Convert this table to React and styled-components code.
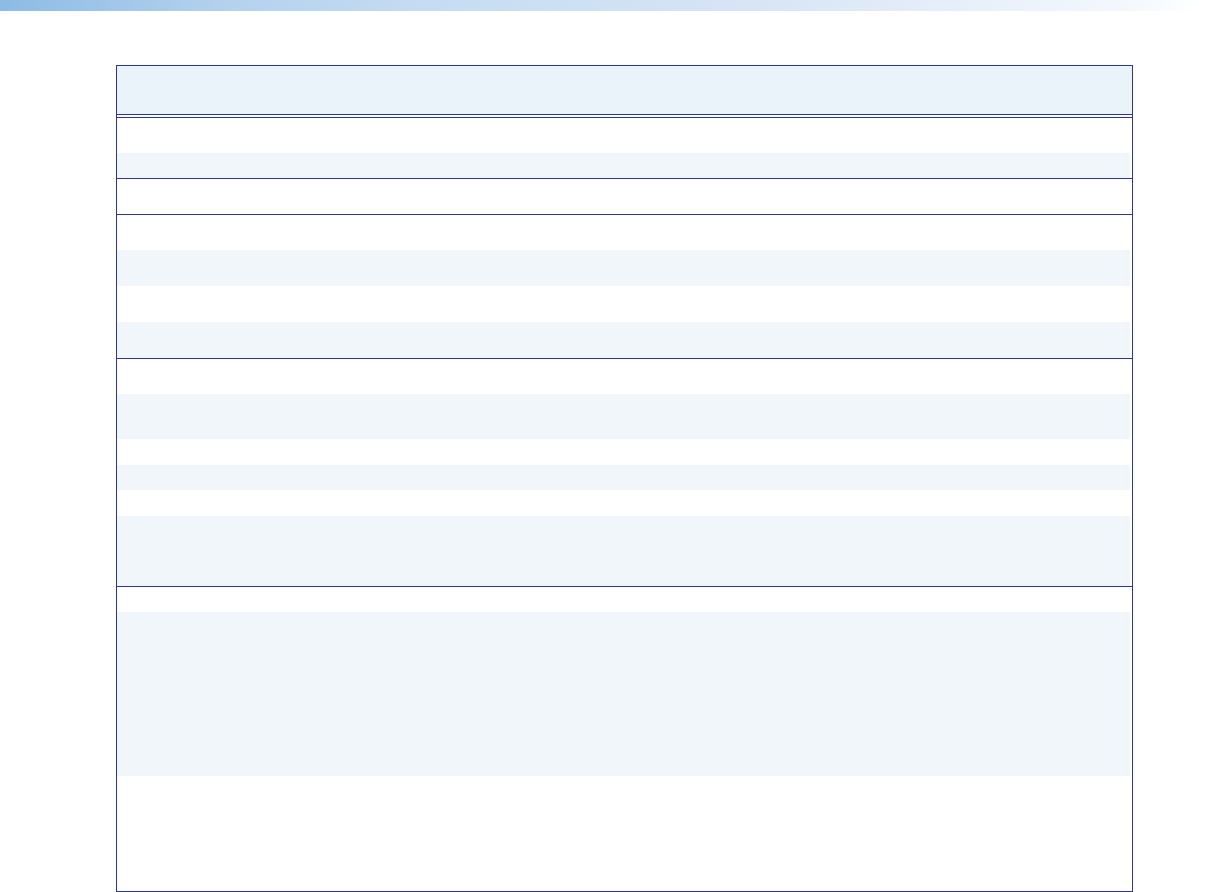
import React from "react";
import styled, { createGlobalStyle } from "styled-components";

const GlobalStyle = createGlobalStyle`
  html, body { margin: 0; padding: 0; background: #ffffff; }
  body { font-family: "Liberation Sans", Arial, sans-serif; }
`;

const Page = styled.div`
  width: 1224px;
  height: 892px;
  display: flex;
  flex-direction: column;
  background: #ffffff;
  overflow: hidden;
`;

const TopBand = styled.div`
  height: 11px;
  flex: none;
  background: linear-gradient(
    to right,
    #8dbbe5 0%,
    #b3d1ee 18%,
    #c6dcf2 35%,
    #d8e5f5 62%,
    #e8f0fa 80%,
    #f3f8fd 92%,
    #ffffff 98%
  );
`;

const TableFrame = styled.div`
  margin: 54px 0 0 116px;
  width: 1015px;
  border: 1px solid #2c3598;
  display: flex;
  flex-direction: column;
`;

const Header = styled.div`
  height: 48px;
  background: #eaf2fa;
  border-bottom: 1px solid #2c3598;
`;

const Section = styled.div`
  display: flex;
  flex-direction: column;
  padding-right: 2px;
  border-top: ${(p) => (p.$double ? "1px solid #2c3598" : "1px solid #2c3598")};
  margin-top: ${(p) => (p.$double ? "2px" : "0")};
`;

const Row = styled.div`
  height: ${(p) => p.$h}px;
  background: ${(p) => (p.$shaded ? "#f1f6fa" : "#ffffff")};
`;

const sections = [
  [35, 25],
  [35],
  [35, 36, 36, 36],
  [35, 45, 26, 25, 26, 70],
  [25, 164, 115],
];

export default function App() {
  return (
    <>
      <GlobalStyle />
      <Page>
        <TopBand />
        <TableFrame>
          <Header />
          {sections.map((rows, si) => (
            <Section key={si} $double={si === 0}>
              {rows.map((h, ri) => (
                <Row key={ri} $h={h} $shaded={ri % 2 === 1} />
              ))}
            </Section>
          ))}
        </TableFrame>
      </Page>
    </>
  );
}
